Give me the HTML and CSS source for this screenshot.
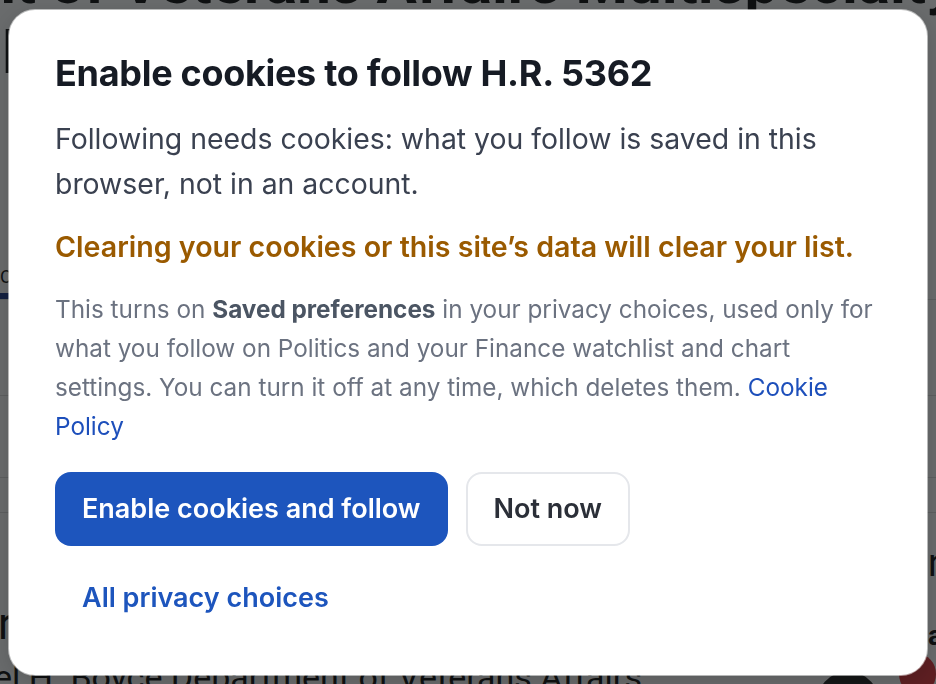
FILE: index.html
```html
<!DOCTYPE html>
<html lang="en">
<head>
    <meta charset="UTF-8">
    <title>Follow H.R. 5362</title>
    <link rel="stylesheet" href="styles.css">
</head>
<body>
    <div class="page">
        <h1 class="page-title">
            <span class="line1">nt of Veterans Affairs Multispecialty Clinic</span>
            <span class="line2">linic</span>
        </h1>
        <div class="tabs">
            <span class="tab active">Overview</span>
            <span class="tab">Text</span>
        </div>
        <div class="rows">
            <div class="row"></div>
            <div class="row short"></div>
        </div>
        <div class="columns">
            <div class="main-col">
                <p class="main-text">r</p>
                <p class="big-text">el H. Boyce Department of Veterans Affairs</p>
            </div>
            <div class="side-col">
                <p class="side-letter">n</p>
                <p class="side-letter bold">a</p>
                <div class="avatars">
                    <span class="photo"></span>
                    <span class="badge"></span>
                </div>
            </div>
        </div>
    </div>

    <div class="overlay">
        <div class="dialog" role="dialog" aria-labelledby="dlg-title">
            <h2 class="dialog-title" id="dlg-title">Enable cookies to follow H.R. 5362</h2>
            <p class="dialog-lead">Following needs cookies: what you follow is saved in this browser, not in an account.</p>
            <p class="dialog-warn">Clearing your cookies or this site’s data will clear your list.</p>
            <p class="dialog-note">This turns on <strong>Saved preferences</strong> in your privacy choices, used only for what you follow on Politics and your Finance watchlist and chart settings. You can turn it off at any time, which deletes them. <a href="#">Cookie Policy</a></p>
            <div class="dialog-actions">
                <button class="btn btn-primary">Enable cookies and follow</button>
                <button class="btn btn-secondary">Not now</button>
            </div>
            <div class="dialog-more">
                <button class="btn btn-link">All privacy choices</button>
            </div>
        </div>
    </div>
</body>
</html>
```

FILE: styles.css
```css
*{
    margin: 0;
    padding: 0;
    box-sizing: border-box;
}
body{
    font-family: Roboto, "Liberation Sans", sans-serif;
    color: #111;
    background: #fff;
    overflow: hidden;
    height: 684px;
}

/* page behind the dialog */
.page{
    width: 936px;
    height: 684px;
    overflow: hidden;
}
.page-title{
    font-size: 60px;
    line-height: 70px;
    font-weight: 700;
    margin-top: -52px;
    margin-left: -18px;
    white-space: nowrap;
}
.page-title span{
    display: block;
}
.page-title .line2{
    padding-left: 20px;
}
.tabs{
    display: flex;
    gap: 30px;
    margin-top: 178px;
    border-bottom: 1px solid #ddd;
}
.tab{
    font-size: 18px;
    line-height: 21px;
    padding-bottom: 6px;
}
.tab.active{
    border-bottom: 6px solid #1e3a8a;
}
.rows{
    margin-top: 95px;
}
.row{
    height: 82px;
    border-top: 1px solid #ddd;
}
.row.short{
    height: 35px;
}
.columns{
    display: grid;
    grid-template-columns: 1fr 120px;
    border-top: 1px solid #ddd;
}
.main-text{
    font-size: 44px;
    line-height: 50px;
    margin-top: 86px;
    margin-left: -2px;
}
.big-text{
    font-size: 34px;
    line-height: 40px;
    margin-top: 8px;
    margin-left: -6px;
    white-space: nowrap;
}
.side-letter{
    font-size: 38px;
    line-height: 40px;
    padding-left: 112px;
    margin-top: 30px;
}
.side-letter.bold{
    font-size: 28px;
    line-height: 30px;
    font-weight: 700;
    margin-top: 38px;
}
.avatars{
    display: flex;
    align-items: flex-start;
}
.photo{
    width: 70px;
    height: 70px;
    border-radius: 50%;
    background: #222;
    margin-top: 20px;
}
.badge{
    width: 40px;
    height: 40px;
    border-radius: 50%;
    background: #e1363c;
    margin-left: 19px;
    margin-top: 3px;
}

/* dialog */
.overlay{
    position: fixed;
    inset: 0;
    background: rgba(15, 17, 20, 0.62);
    display: flex;
    align-items: center;
    justify-content: center;
    padding: 9px;
}
.dialog{
    width: 100%;
    background: #fff;
    border-radius: 26px;
    padding: 41px 38px 40px 46px;
    font-family: Inter, "Noto Sans", sans-serif;
    box-shadow: 0 0 0 1px rgba(255, 255, 255, 0.55), 0 6px 24px rgba(0, 0, 0, 0.18);
}
.dialog-title{
    font-size: 36px;
    line-height: 44px;
    font-weight: 700;
    color: #161b24;
    letter-spacing: -0.3px;
}
.dialog-lead{
    margin-top: 21px;
    font-size: 28.4px;
    line-height: 45px;
    color: #3a4150;
}
.dialog-warn{
    margin-top: 21px;
    font-size: 28.6px;
    line-height: 40px;
    font-weight: 600;
    color: #9a5a00;
}
.dialog-note{
    margin-top: 23px;
    font-size: 24.3px;
    line-height: 39px;
    color: #6b7280;
}
.dialog-note strong{
    font-weight: 700;
    color: #4b5563;
}
.dialog-note a{
    color: #1d4fbb;
    text-decoration: none;
}
.dialog-actions{
    display: flex;
    gap: 18px;
    margin-top: 26px;
}
.btn{
    font-family: inherit;
    font-size: 27px;
    font-weight: 600;
    height: 74px;
    padding: 0 27px;
    border-radius: 16px;
    cursor: pointer;
}
.btn-primary{
    background: #1d55bd;
    color: #fff;
    border: none;
}
.btn-secondary{
    background: #fff;
    color: #2b2f38;
    border: 2px solid #e5e7eb;
    padding: 0 26px;
}
.dialog-more{
    margin-top: 15px;
}
.btn-link{
    background: none;
    border: none;
    color: #1d55bd;
}
```
